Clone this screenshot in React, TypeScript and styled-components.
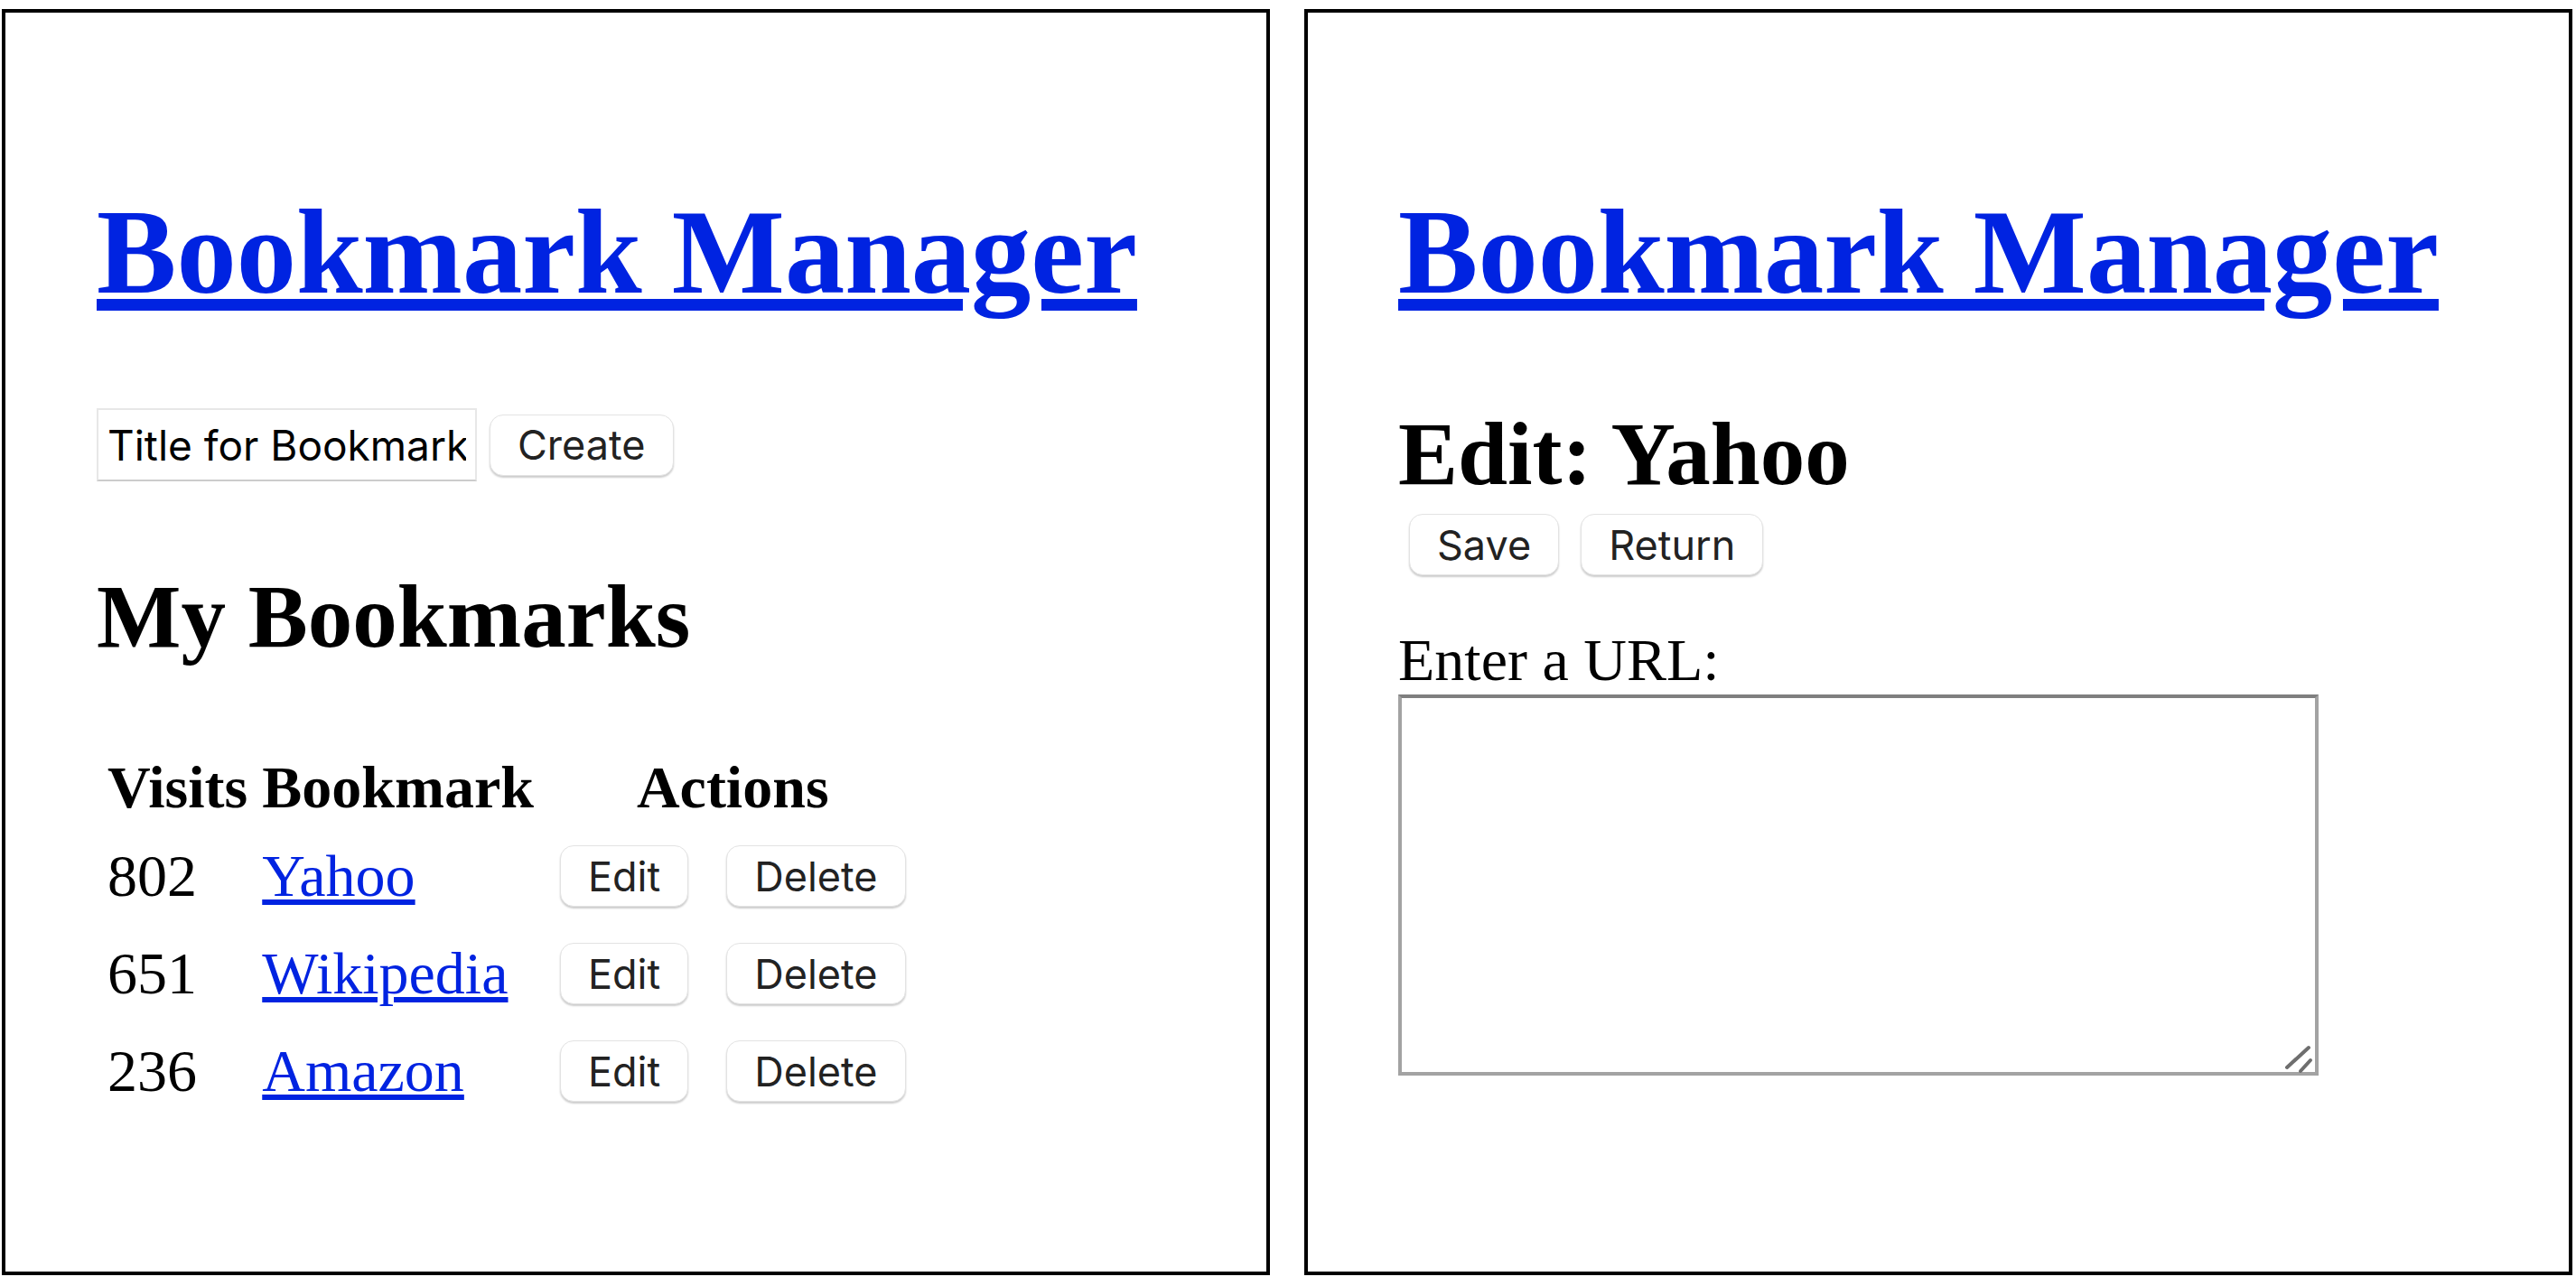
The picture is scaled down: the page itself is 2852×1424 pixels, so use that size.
import React from "react";
import styled, { createGlobalStyle } from "styled-components";

const GlobalStyle = createGlobalStyle`
  html, body {
    margin: 0;
    padding: 0;
    background: #ffffff;
  }
  body {
    font-family: "Liberation Serif", "Times New Roman", serif;
    color: #000;
  }
`;

const LINK_BLUE = "#0023e1";
const UI_FONT = `Inter, "Liberation Sans", Arial, sans-serif`;

const Page = styled.div`
  display: flex;
  gap: 38px;
  padding: 10px 0 0 2px;
`;

const Panel = styled.section<{ $inset: number }>`
  box-sizing: border-box;
  width: 1404px;
  height: 1402px;
  border: 4px solid #000;
  padding-left: ${(p) => p.$inset}px;
  display: flex;
  flex-direction: column;
  align-items: flex-start;
`;

const Title = styled.h1`
  margin: 191px 0 0;
  font-size: 132.5px;
  line-height: 150px;
  font-weight: bold;
  white-space: nowrap;
`;

const Link = styled.a`
  color: ${LINK_BLUE};
  text-decoration: underline;
  cursor: pointer;
`;

const InputRow = styled.div`
  display: flex;
  align-items: center;
  gap: 14px;
  height: 81px;
  margin-top: 97px;
`;

const TitleInput = styled.input`
  box-sizing: border-box;
  width: 421px;
  height: 81px;
  margin: 0;
  padding: 0 10px;
  border: 2px solid #e7e7e7;
  border-bottom-color: #cccccc;
  border-radius: 0;
  background: #fff;
  font-family: ${UI_FONT};
  font-size: 46px;
  color: #000;
  outline: none;
`;

const Button = styled.button`
  box-sizing: border-box;
  display: block;
  height: 68px;
  margin: 0;
  padding: 0 30px;
  border: 1px solid #e3e3e3;
  border-radius: 15px;
  background: #ffffff;
  box-shadow: 0 2px 2px rgba(0, 0, 0, 0.2);
  font-family: ${UI_FONT};
  font-size: 45px;
  line-height: 1;
  color: #222222;
  white-space: nowrap;
  cursor: pointer;
`;

const SectionHeading = styled.h2<{ $top: number }>`
  margin: ${(p) => p.$top}px 0 0;
  font-size: 99px;
  line-height: 110px;
  font-weight: bold;
  white-space: nowrap;
`;

const Table = styled.table`
  margin-top: 86px;
  border-collapse: separate;
  border-spacing: 8px;
  font-size: 66px;
`;

const HeadCell = styled.th`
  padding: 4px;
  line-height: 72px;
  font-weight: bold;
  text-align: center;
  white-space: nowrap;
`;

const BodyRow = styled.tr`
  height: 100px;
`;

const Cell = styled.td`
  padding: 4px;
  line-height: 76px;
  vertical-align: middle;
  white-space: nowrap;
`;

const ActionCell = styled.td`
  padding: 4px 17px;
  vertical-align: middle;
`;

const ButtonRow = styled.div`
  display: flex;
  gap: 24px;
  padding-left: 12px;
  margin-top: 11px;
`;

const FieldLabel = styled.label`
  display: block;
  margin-top: 56px;
  font-size: 66px;
  line-height: 76px;
  white-space: nowrap;
`;

const TextareaWrap = styled.div`
  position: relative;
  width: 1019px;
  height: 422px;
`;

const UrlTextarea = styled.textarea`
  box-sizing: border-box;
  display: block;
  width: 100%;
  height: 100%;
  margin: 0;
  padding: 8px;
  border: 4px solid #a3a3a3;
  border-top-color: #7f7f7f;
  border-radius: 0;
  resize: none;
  outline: none;
  font-family: "Liberation Mono", monospace;
  font-size: 52px;
`;

const ResizeGrip = styled.svg`
  position: absolute;
  right: 0;
  bottom: 0;
  width: 40px;
  height: 40px;
  pointer-events: none;
`;

const bookmarks = [
  { visits: 802, name: "Yahoo" },
  { visits: 651, name: "Wikipedia" },
  { visits: 236, name: "Amazon" },
];

export default function App() {
  return (
    <>
      <GlobalStyle />
      <Page>
        <Panel $inset={101}>
          <Title>
            <Link>Bookmark Manager</Link>
          </Title>
          <InputRow>
            <TitleInput type="text" defaultValue="Title for Bookmark" />
            <Button>Create</Button>
          </InputRow>
          <SectionHeading $top={95}>My Bookmarks</SectionHeading>
          <Table>
            <thead>
              <tr>
                <HeadCell>Visits</HeadCell>
                <HeadCell>Bookmark</HeadCell>
                <HeadCell colSpan={2}>Actions</HeadCell>
              </tr>
            </thead>
            <tbody>
              {bookmarks.map((b) => (
                <BodyRow key={b.name}>
                  <Cell>{b.visits}</Cell>
                  <Cell>
                    <Link>{b.name}</Link>
                  </Cell>
                  <ActionCell>
                    <Button>Edit</Button>
                  </ActionCell>
                  <ActionCell>
                    <Button>Delete</Button>
                  </ActionCell>
                </BodyRow>
              ))}
            </tbody>
          </Table>
        </Panel>
        <Panel $inset={100}>
          <Title>
            <Link>Bookmark Manager</Link>
          </Title>
          <SectionHeading $top={93}>Edit: Yahoo</SectionHeading>
          <ButtonRow>
            <Button>Save</Button>
            <Button>Return</Button>
          </ButtonRow>
          <FieldLabel htmlFor="url-field">Enter a URL:</FieldLabel>
          <TextareaWrap>
            <UrlTextarea id="url-field" />
            <ResizeGrip viewBox="0 0 40 40">
              <line x1="5" y1="31" x2="29" y2="9" stroke="#6e6e6e" strokeWidth="4" strokeLinecap="round" />
              <line x1="20" y1="35" x2="31" y2="23" stroke="#6e6e6e" strokeWidth="4" strokeLinecap="round" />
            </ResizeGrip>
          </TextareaWrap>
        </Panel>
      </Page>
    </>
  );
}
